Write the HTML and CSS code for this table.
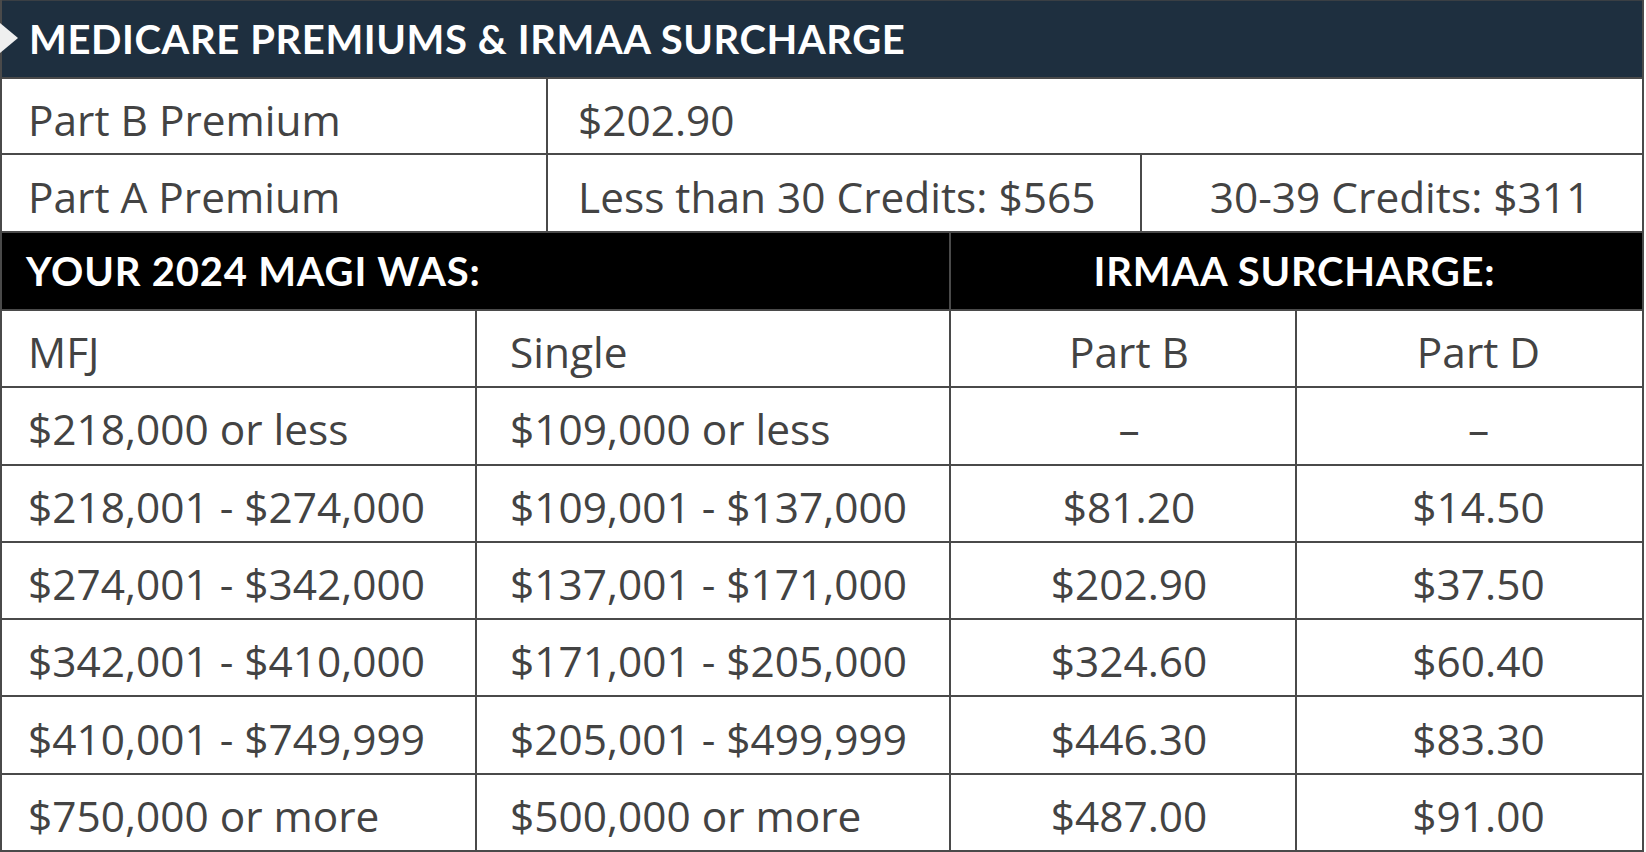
FILE: index.html
```html
<!DOCTYPE html>
<html lang="en">
<head>
<meta charset="utf-8">
<title>Medicare Premiums &amp; IRMAA Surcharge</title>
<link rel="stylesheet" href="styles.css">
</head>
<body>
<div class="sheet">
  <div class="title"><span class="tri"></span>MEDICARE PREMIUMS &amp; IRMAA SURCHARGE</div>

  <div class="row prem prem-b">
    <div class="cell first">Part B Premium</div>
    <div class="cell">$202.90</div>
  </div>
  <div class="row prem prem-a">
    <div class="cell first">Part A Premium</div>
    <div class="cell">Less than 30 Credits: $565</div>
    <div class="cell center credits">30-39 Credits: $311</div>
  </div>

  <div class="row band">
    <div class="cell first">YOUR 2024 MAGI WAS:</div>
    <div class="cell center">IRMAA SURCHARGE:</div>
  </div>

  <div class="row data">
    <div class="cell first">MFJ</div>
    <div class="cell">Single</div>
    <div class="cell center c3">Part B</div>
    <div class="cell center c4">Part D</div>
  </div>
  <div class="row data">
    <div class="cell first">$218,000 or less</div>
    <div class="cell">$109,000 or less</div>
    <div class="cell center c3">–</div>
    <div class="cell center c4">–</div>
  </div>
  <div class="row data">
    <div class="cell first">$218,001 - $274,000</div>
    <div class="cell">$109,001 - $137,000</div>
    <div class="cell center c3">$81.20</div>
    <div class="cell center c4">$14.50</div>
  </div>
  <div class="row data">
    <div class="cell first">$274,001 - $342,000</div>
    <div class="cell">$137,001 - $171,000</div>
    <div class="cell center c3">$202.90</div>
    <div class="cell center c4">$37.50</div>
  </div>
  <div class="row data">
    <div class="cell first">$342,001 - $410,000</div>
    <div class="cell">$171,001 - $205,000</div>
    <div class="cell center c3">$324.60</div>
    <div class="cell center c4">$60.40</div>
  </div>
  <div class="row data">
    <div class="cell first">$410,001 - $749,999</div>
    <div class="cell">$205,001 - $499,999</div>
    <div class="cell center c3">$446.30</div>
    <div class="cell center c4">$83.30</div>
  </div>
  <div class="row data">
    <div class="cell first">$750,000 or more</div>
    <div class="cell">$500,000 or more</div>
    <div class="cell center c3">$487.00</div>
    <div class="cell center c4">$91.00</div>
  </div>
</div>
</body>
</html>
```

FILE: styles.css
```css
html, body {
  margin: 0;
  padding: 0;
  background: #ffffff;
}

body {
  font-family: "Open Sans", "Liberation Sans", sans-serif;
  color: #434343;
}

.sheet {
  width: 1644px;
  box-sizing: border-box;
  border-left: 2px solid #4a4a4a;
  border-right: 2px solid #4a4a4a;
}

.title {
  position: relative;
  box-sizing: border-box;
  height: 79px;
  background: #1e2f3f;
  border-top: 1px solid #3a3f44;
  border-bottom: 2px solid #4a4a4a;
  display: flex;
  align-items: center;
  padding-left: 27px;
  font-family: "Lato", "Open Sans", sans-serif;
  font-weight: 700;
  font-size: 40px;
  letter-spacing: 0.6px;
  color: #ffffff;
  white-space: nowrap;
}

.tri {
  position: absolute;
  left: -2px;
  top: 22px;
  width: 0;
  height: 0;
  border-top: 15px solid transparent;
  border-bottom: 15px solid transparent;
  border-left: 18px solid #efefef;
}

.row {
  display: grid;
  box-sizing: border-box;
  border-bottom: 2px solid #4a4a4a;
}

.cell {
  display: flex;
  align-items: center;
  box-sizing: border-box;
  border-left: 2px solid #4a4a4a;
  padding-left: 30px;
  padding-top: 6px;
  white-space: nowrap;
  font-size: 42.4px;
}

.cell.first {
  border-left: none;
  padding-left: 26px;
}

.cell.center {
  justify-content: center;
  padding-left: 0;
}

.cell.credits {
  padding-left: 16px;
}

.prem-b {
  height: 76px;
  grid-template-columns: 544px 1fr;
}

.prem-a {
  height: 78px;
  grid-template-columns: 544px 594px 1fr;
}

.band {
  height: 78px;
  background: #000000;
  grid-template-columns: 947px 1fr;
}

.band .cell {
  padding-top: 0;
  font-family: "Lato", "Open Sans", sans-serif;
  font-weight: 700;
  font-size: 40px;
  letter-spacing: 0.8px;
  color: #ffffff;
}

.band .cell.first {
  padding-left: 24px;
}

.band .cell.center {
  padding-right: 4px;
}

.data {
  height: 77.3px;
  grid-template-columns: 473px 474px 346px 1fr;
}

.data .cell {
  padding-left: 33px;
}

.data .cell.first {
  padding-left: 26px;
}

.data .cell.c3 {
  padding-left: 12px;
}

.data .cell.c4 {
  padding-left: 18px;
}
```
